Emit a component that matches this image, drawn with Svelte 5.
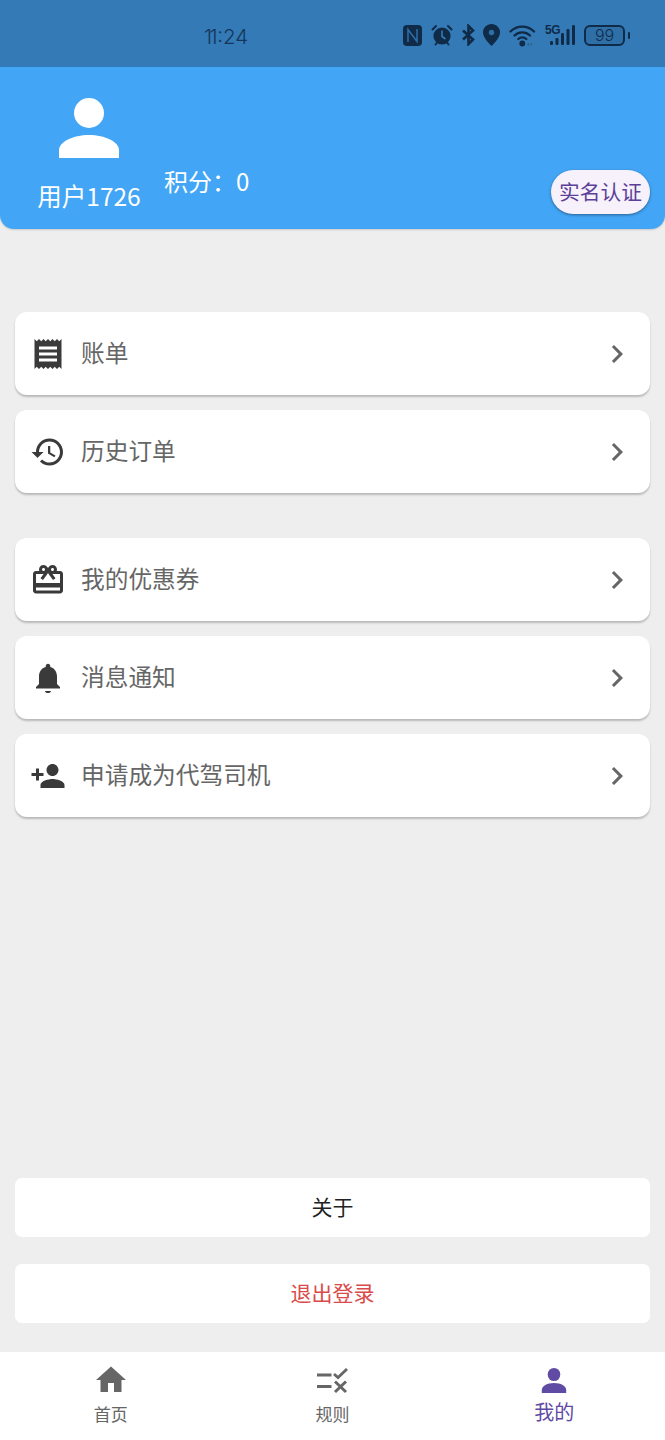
<script>
  const groups = [
    [
      { label: '账单', d: 'M18 17H6v-2h12v2zm0-4H6v-2h12v2zm0-4H6V7h12v2zM3 22l1.5-1.5L6 22l1.5-1.5L9 22l1.5-1.5L12 22l1.5-1.5L15 22l1.5-1.5L18 22l1.5-1.5L21 22V2l-1.5 1.5L18 2l-1.5 1.5L15 2l-1.5 1.5L12 2l-1.5 1.5L9 2 7.5 3.5 6 2 4.5 3.5 3 2v20z' },
      { label: '历史订单', d: 'M13 3c-4.97 0-9 4.03-9 9H1l3.89 3.89.07.14L9 12H6c0-3.87 3.13-7 7-7s7 3.13 7 7-3.13 7-7 7c-1.93 0-3.68-.79-4.94-2.06l-1.42 1.42C8.27 19.99 10.51 21 13 21c4.97 0 9-4.03 9-9s-4.03-9-9-9zm-1 5v5l4.28 2.54.72-1.21-3.5-2.08V8H12z' }
    ],
    [
      { label: '我的优惠券', d: 'M20 6h-2.18c.11-.31.18-.65.18-1 0-1.66-1.34-3-3-3-1.05 0-1.96.54-2.5 1.35l-.5.67-.5-.68C10.96 2.54 10.05 2 9 2 7.34 2 6 3.34 6 5c0 .35.07.69.18 1H4c-1.11 0-1.99.89-1.99 2L2 19c0 1.11.89 2 2 2h16c1.11 0 2-.89 2-2V8c0-1.11-.89-2-2-2zm-5-2c.55 0 1 .45 1 1s-.45 1-1 1-1-.45-1-1 .45-1 1-1zM9 4c.55 0 1 .45 1 1s-.45 1-1 1-1-.45-1-1 .45-1 1-1zm11 15H4v-2h16v2zm0-5H4V8h5.08L7 10.83 8.62 12 11 8.76l1-1.36 1 1.36L15.38 12 17 10.83 14.92 8H20v6z' },
      { label: '消息通知', d: 'M12 22c1.1 0 2-.7 2-1.4h-4c0 .7.89 1.4 2 1.4zm6-6v-5c0-3.07-1.64-5.64-4.5-6.32V4c0-.83-.67-1.5-1.5-1.5s-1.5.67-1.5 1.5v.68C7.63 5.36 6 7.92 6 11v5l-2 2v1h16v-1l-2-2z' },
      { label: '申请成为代驾司机', d: 'M15 12c2.21 0 4-1.79 4-4s-1.79-4-4-4-4 1.79-4 4 1.79 4 4 4zm-9-2V7H4v3H1v2h3v3h2v-3h3v-2H6zm9 4c-2.67 0-8 1.34-8 4v2h16v-2c0-2.66-5.33-4-8-4z' }
    ]
  ];

  const tabs = [
    { label: '首页', icon: 'home' },
    { label: '规则', icon: 'rule' },
    { label: '我的', icon: 'person', active: true }
  ];

  // signal bars: x, top
  const bars = [[5, 16], [10.5, 13], [16, 8], [21.5, 4], [27, 0]];
</script>

<div class="page">
  <div class="status">
    <span class="time"><span class="hour">11</span>:24</span>
    <div class="status-icons">
      <!-- nfc -->
      <svg width="19" height="21" viewBox="0 0 19 21" class="s-nfc">
        <rect x="0" y="0" width="19" height="21" rx="4" fill="#0f2b47" />
        <path d="M5 17V4.5L14 16.5V4" fill="none" stroke="#2f6fa8" stroke-width="1.5" />
      </svg>
      <!-- alarm -->
      <svg width="22" height="22" viewBox="0 0 22 22" class="s-alarm">
        <circle cx="11" cy="12" r="8.6" fill="#0f2b47" />
        <path d="M11 6.5V12.5l3.5 2.5" fill="none" stroke="#337ab7" stroke-width="1.6" />
        <path d="M1.5 5.5L5 2M20.5 5.5L17 2M4.5 20.5l2-2.5M17.5 20.5l-2-2.5" stroke="#0f2b47" stroke-width="2" stroke-linecap="round" />
      </svg>
      <!-- bluetooth -->
      <svg width="14" height="22" viewBox="0 0 14 22" class="s-bt">
        <path d="M2 6.5l10 9-4.5 4.5v-18l4.5 4.5-10 9" fill="none" stroke="#0f2b47" stroke-width="2.6" />
      </svg>
      <!-- pin -->
      <svg width="17" height="22" viewBox="0 0 17 22" class="s-pin">
        <path fill="#0f2b47" d="M8.5 0C3.8 0 0 3.7 0 8.3 0 13.5 5.5 19 8.5 22c3-3 8.5-8.5 8.5-13.7C17 3.7 13.2 0 8.5 0z" />
        <circle cx="8.5" cy="8.5" r="2.7" fill="#2f6fa8" />
      </svg>
      <!-- wifi -->
      <svg width="27" height="23" viewBox="0 0 27 23" class="s-wifi">
        <path d="M1.5 7.5C8 1 18.5 1 25 7.5M5.5 11.5c4.5-4.2 11-4.2 15.5 0M9.3 15c2.3-2 5.7-2 8 0" fill="none" stroke="#0f2b47" stroke-width="2.3" stroke-linecap="round" />
        <circle cx="13.3" cy="19.5" r="2.9" fill="#0f2b47" />
        <path d="M20 18.5l-2 1.8 2 1.8zM21.5 18.5l2 1.8-2 1.8z" fill="#2a5f8f" />
      </svg>
      <!-- 5g + signal -->
      <div class="s-signal">
        <span class="five-g">5G</span>
        <svg width="32" height="20" viewBox="0 0 32 20">
          {#each bars as [x, top]}
            <rect {x} y={top} width="3" height={20 - top} rx="1.2" fill="#0f2b47" />
          {/each}
        </svg>
      </div>
      <!-- battery -->
      <div class="battery"><span>99</span></div>
      <div class="nub"></div>
    </div>
  </div>

  <header class="head">
    <div class="user">
      <svg class="avatar" width="60" height="60" viewBox="0 0 60 60">
        <ellipse cx="30" cy="15" rx="15" ry="15" fill="#fff" />
        <path d="M0 60v-8C0 44 14 37 30 37s30 7 30 15v8z" fill="#fff" />
      </svg>
      <span class="name">用户1726</span>
    </div>
    <div class="points">积分：0</div>
    <button class="verify"><span>实名认证</span></button>
  </header>

  <main class="content">
    {#each groups as group}
      <div class="group">
        {#each group as item}
          <div class="card">
            <svg class="icon" width="36" height="36" viewBox="0 0 24 24"><path d={item.d} fill="#3a3a3a" /></svg>
            <span class="card-label">{item.label}</span>
            <svg class="chevron" width="36" height="36" viewBox="0 0 24 24"><path d="M10 6L8.59 7.41 13.17 12l-4.58 4.59L10 18l6-6z" fill="#666" /></svg>
          </div>
        {/each}
      </div>
    {/each}

    <div class="actions">
      <button class="action"><span>关于</span></button>
      <button class="action danger"><span>退出登录</span></button>
    </div>
  </main>

  <nav class="tabs">
    {#each tabs as tab}
      <div class="tab" class:active={tab.active}>
        {#if tab.icon === 'home'}
          <svg width="36" height="36" viewBox="0 0 24 24"><path d="M10 20v-6h4v6h5v-8h3L12 3 2 12h3v8z" fill="#666" /></svg>
        {:else if tab.icon === 'rule'}
          <svg width="36" height="36" viewBox="0 0 36 36">
            <path d="M3 11.5h14.5v3H3zM3 23h14.5v3H3z" fill="#666" />
            <path d="M20 12l4 3.5 9-8.5" fill="none" stroke="#666" stroke-width="2.8" />
            <path d="M21 19.5l11 10.5M32 19.5l-11 10.5" fill="none" stroke="#666" stroke-width="3" />
          </svg>
        {:else}
          <svg width="36" height="36" viewBox="0 0 36 36">
            <ellipse cx="18" cy="12.5" rx="6.3" ry="6.6" fill="#5f4ba3" />
            <path d="M5.8 31v-3c0-4.2 5.5-7 12.2-7s12.2 2.800 12.2 7v3z" fill="#5f4ba3" />
          </svg>
        {/if}
        <span class="tab-label">{tab.label}</span>
      </div>
    {/each}
  </nav>
</div>

<style>
  :global(body) {
    margin: 0;
    background: #eeeeee;
    font-family: "Noto Sans CJK SC", "Noto Sans", sans-serif;
  }
  .page {
    width: 665px;
    height: 1440px;
    display: flex;
    flex-direction: column;
    overflow: hidden;
  }

  /* status bar */
  .status {
    height: 67px;
    background: #337ab7;
    display: flex;
    align-items: center;
    padding: 3px 35px 0 204px;
    box-sizing: border-box;
    color: #0f2b47;
  }
  .time {
    font-family: "Inter", sans-serif;
    font-weight: 300;
    font-size: 20.5px;
    margin-top: 2px;
    color: #15365a;
  }
  .hour {
    letter-spacing: -2.5px;
    margin-right: 2px;
  }
  .status-icons {
    margin-left: auto;
    display: flex;
    align-items: center;
  }
  .s-alarm { margin-left: 9px; }
  .s-bt { margin-left: 8px; }
  .s-pin { margin-left: 8px; }
  .s-wifi { margin-left: 9px; }
  .s-signal {
    margin-left: 9px;
    width: 31px;
    height: 20px;
    position: relative;
  }
  .s-signal svg { display: block; }
  .five-g {
    position: absolute;
    left: 0;
    top: -1px;
    font-family: "Liberation Sans", sans-serif;
    font-size: 12px;
    line-height: 12px;
    font-weight: 700;
    letter-spacing: -0.5px;
    color: #0f2b47;
  }
  .battery {
    margin-left: 8px;
    width: 41px;
    height: 21px;
    box-sizing: border-box;
    border: 2px solid #0f2b47;
    border-radius: 6px;
    background: #2f6fa8;
    display: flex;
    align-items: center;
    justify-content: center;
  }
  .battery span {
    font-family: "Inter", sans-serif;
    font-weight: 300;
    font-size: 16px;
    line-height: 1;
    color: #0f2b47;
  }
  .nub {
    width: 2px;
    height: 7px;
    margin-left: 3px;
    background: #0f2b47;
    border-radius: 1px;
  }

  /* blue header */
  .head {
    height: 162px;
    flex-shrink: 0;
    background: #42a5f5;
    border-radius: 0 0 14px 14px;
    box-shadow: 0 1px 2px rgba(0, 0, 0, 0.15);
    display: flex;
    align-items: flex-end;
    padding: 0 15px 15px 38px;
    box-sizing: border-box;
    color: #fff;
  }
  .user {
    display: flex;
    flex-direction: column;
    align-items: center;
    width: 102px;
  }
  .avatar {
    display: block;
    margin-bottom: 21px;
  }
  .name {
    font-size: 24.5px;
    line-height: 34px;
    white-space: nowrap;
    padding-bottom: 1px;
  }
  .points {
    margin-left: 24px;
    margin-bottom: 16px;
    font-size: 24px;
    line-height: 34px;
  }
  .verify {
    margin-left: auto;
    width: 99px;
    height: 44px;
    padding: 0 0 3px;
    border: none;
    border-radius: 22px;
    background: #f7f1fb;
    color: #5b3f98;
    font-family: inherit;
    font-size: 20.7px;
    box-shadow: 0 1px 3px rgba(0, 0, 0, 0.4);
  }

  /* menu */
  .content {
    flex: 1;
    display: flex;
    flex-direction: column;
    padding: 83px 15px 29px;
    gap: 45px;
    min-height: 0;
  }
  .group {
    display: flex;
    flex-direction: column;
    gap: 15px;
  }
  .card {
    height: 83px;
    background: #fff;
    border-radius: 12px;
    box-shadow: 0 2px 2px rgba(0, 0, 0, 0.22);
    display: flex;
    align-items: center;
    padding: 0 15px;
  }
  .icon {
    flex-shrink: 0;
    margin-right: 15px;
  }
  .card-label {
    font-size: 23.7px;
    color: #666;
    padding-bottom: 4px;
  }
  .chevron { margin-left: auto; }

  .actions {
    margin-top: auto;
    display: flex;
    flex-direction: column;
    gap: 27px;
  }
  .action {
    height: 59px;
    padding: 0 0 4px;
    border: none;
    border-radius: 7px;
    background: #fff;
    color: #222;
    font-family: inherit;
    font-size: 21px;
  }
  .action.danger { color: #d94a4a; }

  /* bottom tabs */
  .tabs {
    height: 88px;
    flex-shrink: 0;
    background: #fff;
    display: grid;
    grid-template-columns: repeat(3, 1fr);
  }
  .tab {
    display: flex;
    flex-direction: column;
    align-items: center;
    padding-top: 10px;
    color: #666;
  }
  .tab svg { display: block; }
  .tab-label {
    font-size: 17px;
    line-height: 24px;
    margin-top: 4px;
  }
  .tab.active { color: #5f4ba3; }
  .tab.active .tab-label {
    font-size: 20px;
    margin-top: 2px;
  }
</style>
